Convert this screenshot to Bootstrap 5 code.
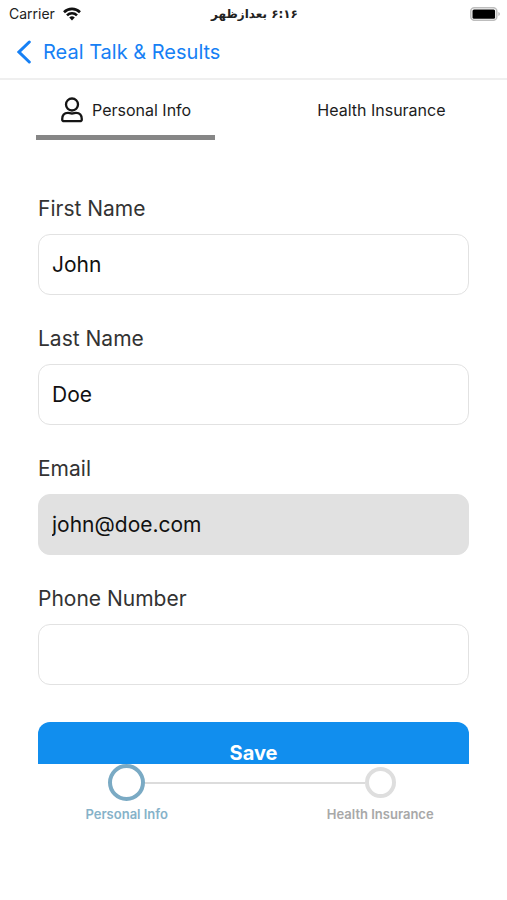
<!DOCTYPE html>
<html lang="en">
<head>
<meta charset="utf-8">
<meta name="viewport" content="width=device-width, initial-scale=1">
<title>Personal Info</title>
<link href="https://cdn.jsdelivr.net/npm/bootstrap@5.3.0/dist/css/bootstrap.min.css" rel="stylesheet">
<style>
  body { font-family: Inter, "Liberation Sans", sans-serif; color: #111; background: #fff; }
  .status-bar { height: 28px; padding: 0 7px 0 9px; font-size: 14px; line-height: 28px; color: #222; }
  .status-side { flex: 1 1 0; }
  .status-time { font-family: "DejaVu Sans", sans-serif; font-size: 12px; font-weight: 700; }
  .title-bar { height: 52px; padding: 0 17px 2px; border-bottom: 2px solid #efefef; }
  .back-link { gap: 12px; font-size: 20px; line-height: 24px; color: #1680f5; }
  .tab-strip { padding: 0 36px; }
  .tab-item { width: 41.2%; height: 60px; padding: 4px 0 0; border: 0; border-bottom: 5px solid transparent; background: none; font-size: 16px; line-height: 24px; color: #1c1c1c; }
  .tab-item.active { border-bottom-color: #868686; }
  .form-scroll { padding: 56px 38px 0; }
  .field { margin-bottom: 31px; }
  .field:last-of-type { margin-bottom: 37px; }
  .field-label { margin-bottom: 12px; font-size: 21px; line-height: 26px; color: #333; display: block; }
  .field-input { height: 61px; padding: 0 13px; border: 1px solid #e2e2e2; border-radius: 12px; font-size: 21px; color: #111; background: #fff; }
  .field-input:disabled { background: #e1e1e1; border-color: #e1e1e1; color: #111; opacity: 1; }
  .save-btn { height: 61px; padding: 0; border: 0; border-radius: 12px; background: #118eee; font-size: 20px; line-height: 22px; font-weight: 700; color: #fff; }
  .stepper { height: 136px; }
  .step-track { height: 37px; }
  .step-line { height: 2px; background: #dcdcdc; }
  .step-dot { width: 31px; height: 31px; border: 4px solid #dedede; }
  .step-dot.current { width: 37px; height: 37px; border-color: #7aaac4; }
  .step-label { font-size: 13px; font-weight: 600; line-height: 26px; color: #a8a8a8; }
  .step-label.current { color: #86b2c9; }
</style>
<script src="https://cdn.jsdelivr.net/npm/bootstrap@5.3.0/dist/js/bootstrap.bundle.min.js"></script>
</head>
<body class="vh-100 d-flex flex-column overflow-hidden">
  <div class="status-bar d-flex align-items-center flex-shrink-0">
    <div class="status-side d-flex align-items-center">
      <span>Carrier</span>
      <svg class="ms-2" width="18" height="14" viewBox="0 0 18 14" fill="none" stroke="#111" stroke-width="2.6" aria-hidden="true">
        <path d="M1 5.2C5.500 .8 12.500 .8 17 5.200"/><path d="M4 8.300C6.800 5.500 11.200 5.500 14 8.300"/><path d="M9 13.400 6.200 10.500Q9 8.100 11.800 10.500Z" fill="#111" stroke="none"/>
      </svg>
    </div>
    <span class="status-time" lang="fa" dir="rtl">۶:۱۶ بعدازظهر</span>
    <div class="status-side d-flex justify-content-end">
      <svg width="30" height="14" viewBox="0 0 30 14" aria-hidden="true">
        <rect x=".8" y=".8" width="26" height="12.500" rx="3.500" fill="#fff" stroke="#bdbdbd" stroke-width="1.500"/><rect x="2.500" y="2.500" width="22.600" height="9.200" rx="1.500" fill="#000"/><path d="M28.300 5Q30 5.400 30 7T28.300 9Z" fill="#bdbdbd"/>
      </svg>
    </div>
  </div>
  <header class="title-bar d-flex align-items-center flex-shrink-0">
    <a href="#" class="back-link d-flex align-items-center text-decoration-none">
      <svg width="14" height="24" viewBox="0 0 14 24" fill="none" stroke="#1680f5" stroke-width="3" stroke-linecap="round" aria-hidden="true"><path d="M12.300 2 2 12 12.300 22"/></svg>
      <span>Real Talk &amp; Results</span>
    </a>
  </header>
  <nav class="tab-strip d-flex justify-content-between flex-shrink-0">
    <button type="button" class="tab-item active d-flex align-items-center justify-content-center">
      <svg class="me-2" width="24" height="26" viewBox="0 0 24 26" fill="none" stroke="#151515" stroke-width="2.300" stroke-linejoin="round" aria-hidden="true"><circle cx="12" cy="7.500" r="6"/><path d="M2.200 22.200C2.200 18 4.600 15.800 8 15.800C9.400 15.800 10.200 16.500 12 16.500S14.600 15.800 16 15.800C19.400 15.800 21.800 18 21.800 22.200Q21.800 24.200 19.800 24.200H4.200Q2.200 24.200 2.200 22.200Z"/></svg>
      <span>Personal Info</span>
    </button>
    <button type="button" class="tab-item">Health Insurance</button>
  </nav>
  <main class="form-scroll flex-grow-1 overflow-hidden">
    <form>
      <div class="field">
        <label class="field-label" for="firstName">First Name</label>
        <input class="field-input form-control" id="firstName" type="text" value="John">
      </div>
      <div class="field">
        <label class="field-label" for="lastName">Last Name</label>
        <input class="field-input form-control" id="lastName" type="text" value="Doe">
      </div>
      <div class="field">
        <label class="field-label" for="email">Email</label>
        <input class="field-input form-control" id="email" type="email" value="john@doe.com" disabled>
      </div>
      <div class="field">
        <label class="field-label" for="phone">Phone Number</label>
        <input class="field-input form-control" id="phone" type="tel">
      </div>
      <button type="button" class="save-btn btn w-100">Save</button>
    </form>
  </main>
  <footer class="stepper d-flex flex-shrink-0">
    <div class="w-50 text-center">
      <div class="step-track d-flex align-items-center">
        <span class="flex-fill"></span><span class="step-dot current rounded-circle"></span><span class="step-line flex-fill"></span>
      </div>
      <div class="step-label current">Personal Info</div>
    </div>
    <div class="w-50 text-center">
      <div class="step-track d-flex align-items-center">
        <span class="step-line flex-fill"></span><span class="step-dot rounded-circle"></span><span class="flex-fill"></span>
      </div>
      <div class="step-label">Health Insurance</div>
    </div>
  </footer>
</body>
</html>
